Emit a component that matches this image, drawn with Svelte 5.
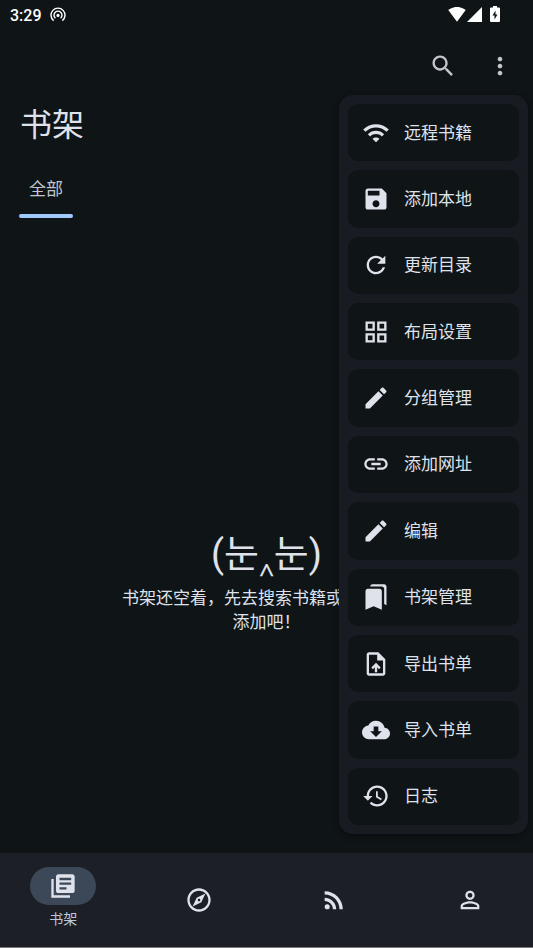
<script lang="ts">
	type Entry = { label: string; icon: string };

	const icons: Record<string, string> = {
		search:
			'M15.5 14h-.79l-.28-.27C15.41 12.59 16 11.11 16 9.5 16 5.91 13.09 3 9.5 3S3 5.91 3 9.5 5.91 16 9.5 16c1.61 0 3.09-.59 4.23-1.57l.27.28v.79l5 4.99L20.49 19l-4.99-5zm-6 0C7.01 14 5 11.99 5 9.5S7.01 5 9.5 5 14 7.01 14 9.5 11.99 14 9.5 14z',
		more: 'M12 8c1.1 0 2-.9 2-2s-.9-2-2-2-2 .9-2 2 .9 2 2 2zm0 2c-1.1 0-2 .9-2 2s.9 2 2 2 2-.9 2-2-.9-2-2-2zm0 6c-1.1 0-2 .9-2 2s.9 2 2 2 2-.9 2-2-.9-2-2-2z',
		wifi: 'M1 9l2 2c4.97-4.97 13.03-4.97 18 0l2-2C16.93 2.93 7.08 2.93 1 9zm8 8l3 3 3-3c-1.65-1.66-4.34-1.66-6 0zm-4-4l2 2c2.76-2.76 7.24-2.76 10 0l2-2C15.14 9.14 8.87 9.14 5 13z',
		save: 'M17 3H5c-1.11 0-2 .9-2 2v14c0 1.1.89 2 2 2h14c1.1 0 2-.9 2-2V7l-4-4zm-5 16c-1.66 0-3-1.34-3-3s1.34-3 3-3 3 1.34 3 3-1.34 3-3 3zm3-10H5V5h10v4z',
		refresh:
			'M17.65 6.35C16.2 4.9 14.21 4 12 4c-4.42 0-7.99 3.58-7.99 8s3.57 8 7.99 8c3.73 0 6.84-2.55 7.73-6h-2.08c-.82 2.33-3.04 4-5.65 4-3.31 0-6-2.69-6-6s2.69-6 6-6c1.66 0 3.14.69 4.22 1.78L13 11h7V4l-2.35 2.35z',
		grid: 'M3 3v8h8V3H3zm6 6H5V5h4v4zm-6 4v8h8v-8H3zm6 6H5v-4h4v4zm4-16v8h8V3h-8zm6 6h-4V5h4v4zm-6 4v8h8v-8h-8zm6 6h-4v-4h4v4z',
		edit: 'M3 17.25V21h3.75L17.81 9.94l-3.75-3.75L3 17.25zM20.71 7.04c.39-.39.39-1.02 0-1.41l-2.34-2.34c-.39-.39-1.02-.39-1.41 0l-1.83 1.83 3.75 3.75 1.83-1.83z',
		link: 'M3.9 12c0-1.71 1.39-3.1 3.1-3.1h4V7H7c-2.76 0-5 2.24-5 5s2.24 5 5 5h4v-1.9H7c-1.71 0-3.1-1.39-3.1-3.1zM8 13h8v-2H8v2zm9-6h-4v1.9h4c1.71 0 3.1 1.39 3.1 3.1s-1.39 3.1-3.1 3.1h-4V17h4c2.76 0 5-2.24 5-5s-2.24-5-5-5z',
		bookmarks:
			'M19 18l2 1V3c0-1.1-.9-2-2-2H8.99C7.89 1 7 1.9 7 3h10c1.1 0 2 .9 2 2v13zM15 5H5c-1.1 0-2 .9-2 2v16l7-3 7 3V7c0-1.1-.9-2-2-2z',
		upload:
			'M14 2H6c-1.1 0-1.99.9-1.99 2L4 20c0 1.1.89 2 1.99 2H18c1.1 0 2-.9 2-2V8l-6-6zm4 18H6V4h7v5h5v11zM8 15.01l1.41 1.41L11 14.84V19h2v-4.16l1.59 1.59L16 15.01 12.01 11 8 15.01z',
		cloud: 'M19.35 10.04C18.67 6.59 15.64 4 12 4 9.11 4 6.6 5.64 5.35 8.04 2.34 8.36 0 10.91 0 14c0 3.31 2.69 6 6 6h13c2.76 0 5-2.24 5-5 0-2.64-2.05-4.78-4.65-4.96zM17 13l-5 5-5-5h3V9h4v4h3z',
		history:
			'M13 3c-4.97 0-9 4.03-9 9H1l3.89 3.89.07.14L9 12H6c0-3.87 3.13-7 7-7s7 3.13 7 7-3.13 7-7 7c-1.93 0-3.68-.79-4.94-2.06l-1.42 1.42C8.27 19.99 10.51 21 13 21c4.97 0 9-4.03 9-9s-4.03-9-9-9zm-1 5v5l4.28 2.54.72-1.21-3.5-2.08V8H12z',
		books: 'M4 6H2v16h16v-2H4V6zM20 2H8c-1.1 0-2 .9-2 2v12c0 1.1.9 2 2 2h12c1.1 0 2-.9 2-2V4c0-1.1-.9-2-2-2zm-1 9H9V9h10v2zm-4 4H9v-2h6v2zm4-8H9V5h10v2z',
		explore:
			'M12 2C6.48 2 2 6.48 2 12s4.48 10 10 10 10-4.48 10-10S17.52 2 12 2zm0 18c-4.41 0-8-3.59-8-8s3.59-8 8-8 8 3.59 8 8-3.59 8-8 8zm-5.5-2.5l7.51-3.49L17.5 6.5 9.99 9.99 6.5 17.5zm5.5-6.6c.61 0 1.1.49 1.1 1.1s-.49 1.1-1.1 1.1-1.1-.49-1.1-1.1.49-1.1 1.1-1.1z',
		rss: 'M6.18 15.64a2.18 2.18 0 1 0 0 4.36 2.18 2.18 0 0 0 0-4.36zM4 4.44v2.83c7.03 0 12.73 5.7 12.73 12.73h2.83c0-8.59-6.97-15.56-15.56-15.56zm0 5.66v2.83c3.9 0 7.07 3.17 7.07 7.07h2.83c0-5.47-4.43-9.9-9.9-9.9z',
		person:
			'M12 5.9a2.1 2.1 0 1 1 0 4.2 2.1 2.1 0 0 1 0-4.2m0 9c2.97 0 6.1 1.46 6.1 2.1v1.1H5.9V17c0-.64 3.13-2.1 6.1-2.1M12 4C9.79 4 8 5.79 8 8s1.79 4 4 4 4-1.79 4-4-1.79-4-4-4zm0 9c-2.67 0-8 1.34-8 4v3h16v-3c0-2.66-5.33-4-8-4z'
	};

	const menu: Entry[] = [
		{ label: '远程书籍', icon: 'wifi' },
		{ label: '添加本地', icon: 'save' },
		{ label: '更新目录', icon: 'refresh' },
		{ label: '布局设置', icon: 'grid' },
		{ label: '分组管理', icon: 'edit' },
		{ label: '添加网址', icon: 'link' },
		{ label: '编辑', icon: 'edit' },
		{ label: '书架管理', icon: 'bookmarks' },
		{ label: '导出书单', icon: 'upload' },
		{ label: '导入书单', icon: 'cloud' },
		{ label: '日志', icon: 'history' }
	];

	const tabs: Entry[] = [
		{ label: '书架', icon: 'books' },
		{ label: '发现', icon: 'explore' },
		{ label: '订阅', icon: 'rss' },
		{ label: '我的', icon: 'person' }
	];

	let active = $state(0);
	let menuOpen = $state(true);
</script>

{#snippet icon(name: string)}
	<svg class="icon" viewBox="0 0 24 24" aria-hidden="true"><path d={icons[name]} /></svg>
{/snippet}

<div class="page">
	<div class="status">
		<span class="time">3:29</span>
		<svg class="cast" viewBox="0 0 16 16" aria-hidden="true">
			<path d="M3.6 13.6A7 7 0 1 1 12.4 13.6" />
			<path d="M5.4 11.2A4 4 0 1 1 10.6 11.2" />
			<circle cx="8" cy="8.4" r="1.6" />
		</svg>
		<div class="signals">
			<svg class="net" viewBox="0 0 24 20" aria-hidden="true">
				<path d="M12 19.5L23.64 4C23.2 3.66 18.7 0 12 0S.8 3.66.36 4z" />
			</svg>
			<svg class="cell" viewBox="0 0 20 20" aria-hidden="true"><path d="M0 20h20V0z" /></svg>
			<svg class="battery" viewBox="0 0 10 16" aria-hidden="true">
				<path
					d="M3 0h4v1.5h2a1 1 0 0 1 1 1V15a1 1 0 0 1-1 1H1a1 1 0 0 1-1-1V2.500a1 1 0 0 1 1-1h2zM5.500 4.500L2.500 9.500h2v4l3-5h-2z"
					fill-rule="evenodd"
				/>
			</svg>
		</div>
	</div>

	<header>
		<button type="button" aria-label="搜索">{@render icon('search')}</button>
		<button type="button" aria-label="更多" onclick={() => (menuOpen = !menuOpen)}>
			{@render icon('more')}
		</button>
	</header>

	<h1>书架</h1>

	<div class="groups">
		<button type="button" class="group">全部</button>
	</div>

	<main>
		<div class="face" lang="ko">(눈‸눈)</div>
		<p>书架还空着，先去搜索书籍或从发现里添加吧！</p>
	</main>

	<nav>
		{#each tabs as tab, i}
			<button
				type="button"
				class="tab"
				class:active={active === i}
				aria-label={tab.label}
				onclick={() => (active = i)}
			>
				<span class="pill">{@render icon(tab.icon)}</span>
				{#if active === i}
					<span class="label">{tab.label}</span>
				{/if}
			</button>
		{/each}
	</nav>

	{#if menuOpen}
		<div class="menu">
			{#each menu as item}
				<button type="button" class="item">
					{@render icon(item.icon)}
					<span>{item.label}</span>
				</button>
			{/each}
		</div>
	{/if}
</div>

<style>
	:global(body) {
		margin: 0;
		background: #0f1417;
	}

	.page {
		position: relative;
		display: flex;
		flex-direction: column;
		min-height: 100vh;
		background: #0f1417;
		color: #dfe2eb;
		font-family: Roboto, 'Noto Sans CJK SC', sans-serif;
		font-size: 17px;
	}

	button {
		display: flex;
		align-items: center;
		margin: 0;
		padding: 0;
		border: none;
		background: none;
		color: inherit;
		font: inherit;
		cursor: pointer;
	}

	.icon {
		flex: none;
		width: 28px;
		height: 28px;
		fill: currentColor;
	}

	.status {
		display: flex;
		align-items: center;
		height: 30px;
		padding: 0 33px 0 10px;
		color: #fff;
	}

	.time {
		font-size: 16px;
		font-weight: 500;
	}

	.cast {
		width: 16px;
		height: 16px;
		margin-left: 8px;
		fill: none;
		stroke: #fff;
		stroke-width: 1.4;
	}

	.cast circle {
		fill: #fff;
		stroke: none;
	}

	.signals {
		display: flex;
		align-items: center;
		margin-left: auto;
		padding-bottom: 2px;
		fill: #fff;
	}

	.net {
		width: 18px;
		height: 15px;
	}

	.cell {
		width: 15px;
		height: 15px;
		margin-left: 1px;
	}

	.battery {
		width: 10px;
		height: 16px;
		margin-left: 8px;
	}

	header {
		display: flex;
		justify-content: flex-end;
		height: 72px;
		padding-right: 5px;
		color: #c3c6cf;
	}

	header button {
		justify-content: center;
		width: 57px;
	}

	h1 {
		margin: 0;
		padding: 0 20px;
		font-size: 32px;
		font-weight: 400;
		line-height: 46px;
	}

	.groups {
		display: flex;
		height: 70px;
		padding: 0 19px;
	}

	.group {
		position: relative;
		padding: 8px 10px 0;
		color: #c3c6cf;
	}

	.group::after {
		content: '';
		position: absolute;
		left: 0;
		right: 0;
		bottom: 0;
		height: 4px;
		border-radius: 2px;
		background: #a0caff;
	}

	main {
		flex: 1;
		display: flex;
		flex-direction: column;
		align-items: center;
		justify-content: center;
		padding: 92px 120px 0;
		text-align: center;
	}

	.face {
		font-family: Roboto, 'Noto Sans CJK KR', sans-serif;
		font-size: 38px;
		line-height: 48px;
		padding-bottom: 8px;
	}

	main p {
		margin: 0;
		line-height: 24px;
	}

	nav {
		display: flex;
		gap: 9px;
		height: 94px;
		border-bottom: 1px solid #77797c;
		background: #1c2026;
	}

	.tab {
		flex: 1;
		flex-direction: column;
		justify-content: center;
		gap: 4px;
	}

	.tab.active {
		padding-bottom: 4px;
	}

	.pill {
		display: flex;
		align-items: center;
		justify-content: center;
		width: 66px;
		height: 38px;
		border-radius: 19px;
	}

	.active .pill {
		background: #3c4858;
	}

	.label {
		color: #bbc7db;
		font-size: 14px;
		line-height: 20px;
	}

	.menu {
		position: absolute;
		top: 95px;
		right: 5px;
		bottom: 114px;
		display: flex;
		flex-direction: column;
		gap: 9px;
		box-sizing: border-box;
		width: 189px;
		padding: 9px;
		border-radius: 14px;
		background: #181c22;
		box-shadow: 0 2px 6px rgba(0, 0, 0, 0.4);
	}

	.item {
		flex: 1;
		gap: 14px;
		padding: 0 14px;
		border-radius: 10px;
		background: #0f1417;
	}

	.item span {
		padding-bottom: 3px;
	}
</style>
